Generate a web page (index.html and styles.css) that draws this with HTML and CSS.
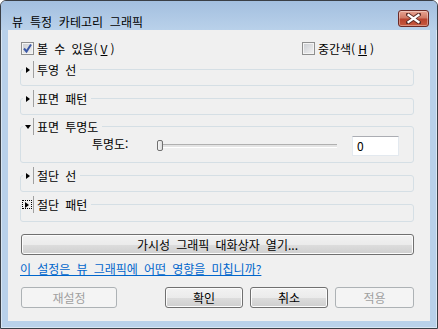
FILE: index.html
```html
<!DOCTYPE html>
<html lang="ko">
<head>
    <meta charset="UTF-8">
    <title>뷰 특정 카테고리 그래픽</title>
    <link rel="stylesheet" href="styles.css">
</head>
<body>

<div class="window">
    <div class="titlebar">
        <span class="title">뷰 특정 카테고리 그래픽</span>
        <span class="close-btn">
            <svg width="15" height="11" viewBox="0 0 15 11">
                <path d="M2 1.5 L13 9.5 M13 1.5 L2 9.5" stroke="#5a2a25" stroke-width="4" stroke-linecap="square"/>
                <path d="M2.5 2 L12.5 9 M12.5 2 L2.5 9" stroke="#fff" stroke-width="2.2" stroke-linecap="square"/>
            </svg>
        </span>
    </div>

    <div class="client">
        <div class="check-row">
            <label class="check first">
                <span class="box">
                    <svg width="11" height="11" viewBox="0 0 11 11"><path d="M2 5.5 L4.5 8.5 L9 1.5" fill="none" stroke="#3b58a6" stroke-width="2"/></svg>
                </span>
                볼 수 있음(<u>V</u>)
            </label>
            <label class="check">
                <span class="box"></span>
                중간색(<u>H</u>)
            </label>
        </div>

        <div class="group g-first">
            <div class="head"><span class="arrow right"></span><span class="sep"></span>투영 선</div>
        </div>
        <div class="group">
            <div class="head"><span class="arrow right"></span><span class="sep"></span>표면 패턴</div>
        </div>
        <div class="group open">
            <div class="head"><span class="arrow down"></span><span class="sep"></span>표면 투명도</div>
            <div class="slider-row">
                <span class="slider-label">투명도:</span>
                <div class="track"><span class="thumb"></span></div>
                <span class="num-input">0</span>
            </div>
        </div>
        <div class="group">
            <div class="head"><span class="arrow right"></span><span class="sep"></span>절단 선</div>
        </div>
        <div class="group g-last">
            <div class="head"><span class="focus"><span class="arrow right"></span></span><span class="sep"></span>절단 패턴</div>
        </div>

        <div class="btn wide">가시성 그래픽 대화상자 열기...</div>

        <a class="help-link" href="#">이 설정은 뷰 그래픽에 어떤 영향을 미칩니까?</a>

        <div class="btn-row">
            <div class="btn disabled w-reset">재설정</div>
            <div class="btn-group">
                <div class="btn w-ok">확인</div>
                <div class="btn w-cancel">취소</div>
                <div class="btn disabled w-apply">적용</div>
            </div>
        </div>
    </div>
</div>

</body>
</html>
```

FILE: styles.css
```css
body { margin: 0; background: #fff; font-family: "Noto Sans CJK KR", "Noto Sans", sans-serif; font-size: 12px; word-spacing: 2.8px; color: #000; }

/* Window frame */
.window { width: 438px; height: 329px; box-sizing: border-box; border: 1px solid #3a3f46; border-radius: 6px 6px 0 0; padding: 0 7px 7px; background: #b9d1ea; box-shadow: inset 0 0 0 1px #d9e6f3; }
.titlebar { display: flex; justify-content: space-between; align-items: flex-start; height: 29px; margin: 0 -7px; padding: 0 8px 0 11px; background: linear-gradient(#a3bfdf, #b9d1ea); border-radius: 5px 5px 0 0; }
.title { margin-top: 13px; line-height: 15px; word-spacing: 3.5px; }
.close-btn { margin-top: 9px; width: 31px; height: 17px; box-sizing: border-box; border: 1px solid #6b2a26; border-radius: 3px; background: linear-gradient(#e8a493, #d07a66 45%, #b8422e 55%, #c75a3f); display: flex; align-items: center; justify-content: center; box-shadow: inset 0 0 0 1px rgba(255,255,255,0.35); }

/* Client area */
.client { height: 291px; box-sizing: border-box; background: #f0f0f0; padding: 11px 16px 0 12px; display: flex; flex-direction: column; }

.check-row { display: flex; height: 15px; align-items: center; padding-left: 1px; }
.check { display: flex; align-items: center; gap: 3px; line-height: 15px; }
.check.first { width: 281px; }
.box { width: 13px; height: 13px; box-sizing: border-box; border: 1px solid #8e8f8f; background: linear-gradient(135deg, #c9ccd1, #f3f3f3); box-shadow: inset 0 0 0 1px #f4f4f4; display: flex; align-items: center; justify-content: center; }
.check u { text-decoration: underline; }

/* Expander groups */
.group { height: 17px; box-sizing: border-box; border: 1px solid #d5dfe5; border-radius: 3px; margin-top: 12px; }
.g-first { margin-top: 13px; }
.group.open { height: 37px; margin-top: 11px; }
.g-last { height: 18px; }
.head { display: flex; width: max-content; align-items: center; height: 17px; margin: -9px 0 0 2px; padding: 0 4px 0 3px; background: #f0f0f0; line-height: 15px; }
.arrow { width: 0; height: 0; }
.arrow.right { border-top: 3.5px solid transparent; border-bottom: 3.5px solid transparent; border-left: 4px solid #000; }
.arrow.down { border-left: 3.5px solid transparent; border-right: 3.5px solid transparent; border-top: 4px solid #000; margin-left: -1px; margin-top: 1px; }
.sep { width: 1px; height: 17px; background: #a0a0a0; margin: 0 3px 0 3px; }
.group .head .arrow.down + .sep { margin-left: 2px; }
.focus { display: flex; align-items: center; justify-content: center; width: 10px; height: 9px; margin-left: -4px; margin-right: -2px; box-sizing: border-box; border: 1px dotted #000; }

.slider-row { display: flex; align-items: flex-start; padding-left: 71px; margin-top: 1px; }
.slider-label { line-height: 15px; width: 65px; }
.track { position: relative; width: 180px; height: 2px; margin-top: 8px; border-top: 1px solid #b0b0b0; border-bottom: 1px solid #fff; background: #e4e4e4; }
.thumb { position: absolute; left: 0; top: -5px; width: 6px; height: 11px; box-sizing: border-box; border: 1px solid #707070; border-radius: 2px; background: linear-gradient(90deg, #f8f8f8, #dcdcdc); }
.num-input { margin-left: 15px; width: 47px; height: 20px; box-sizing: border-box; border: 1px solid #e3e9ef; border-top-color: #abadb3; background: #fff; padding: 1px 0 0 4px; line-height: 16px; }

/* Buttons */
.btn { height: 21px; box-sizing: border-box; border: 1px solid #707070; border-radius: 3px; background: linear-gradient(#f2f2f2, #ebebeb 50%, #dddddd 50%, #cfcfcf); box-shadow: inset 0 0 0 1px #fcfcfc; display: flex; align-items: center; justify-content: center; line-height: 15px; }
.btn.wide { margin: 12px 0 0 1px; }
.btn.disabled { border-color: #adb2b5; background: #f4f4f4; color: #a0a0a0; box-shadow: none; }

.help-link { color: #0066cc; margin-top: 6px; line-height: 16px; align-self: flex-start; }

.btn-row { display: flex; justify-content: space-between; margin: 10px 0 0 1px; }
.btn-group { display: flex; gap: 7px; }
.w-reset { width: 96px; }
.w-ok { width: 78px; }
.w-cancel { width: 78px; }
.w-apply { width: 79px; }
```
